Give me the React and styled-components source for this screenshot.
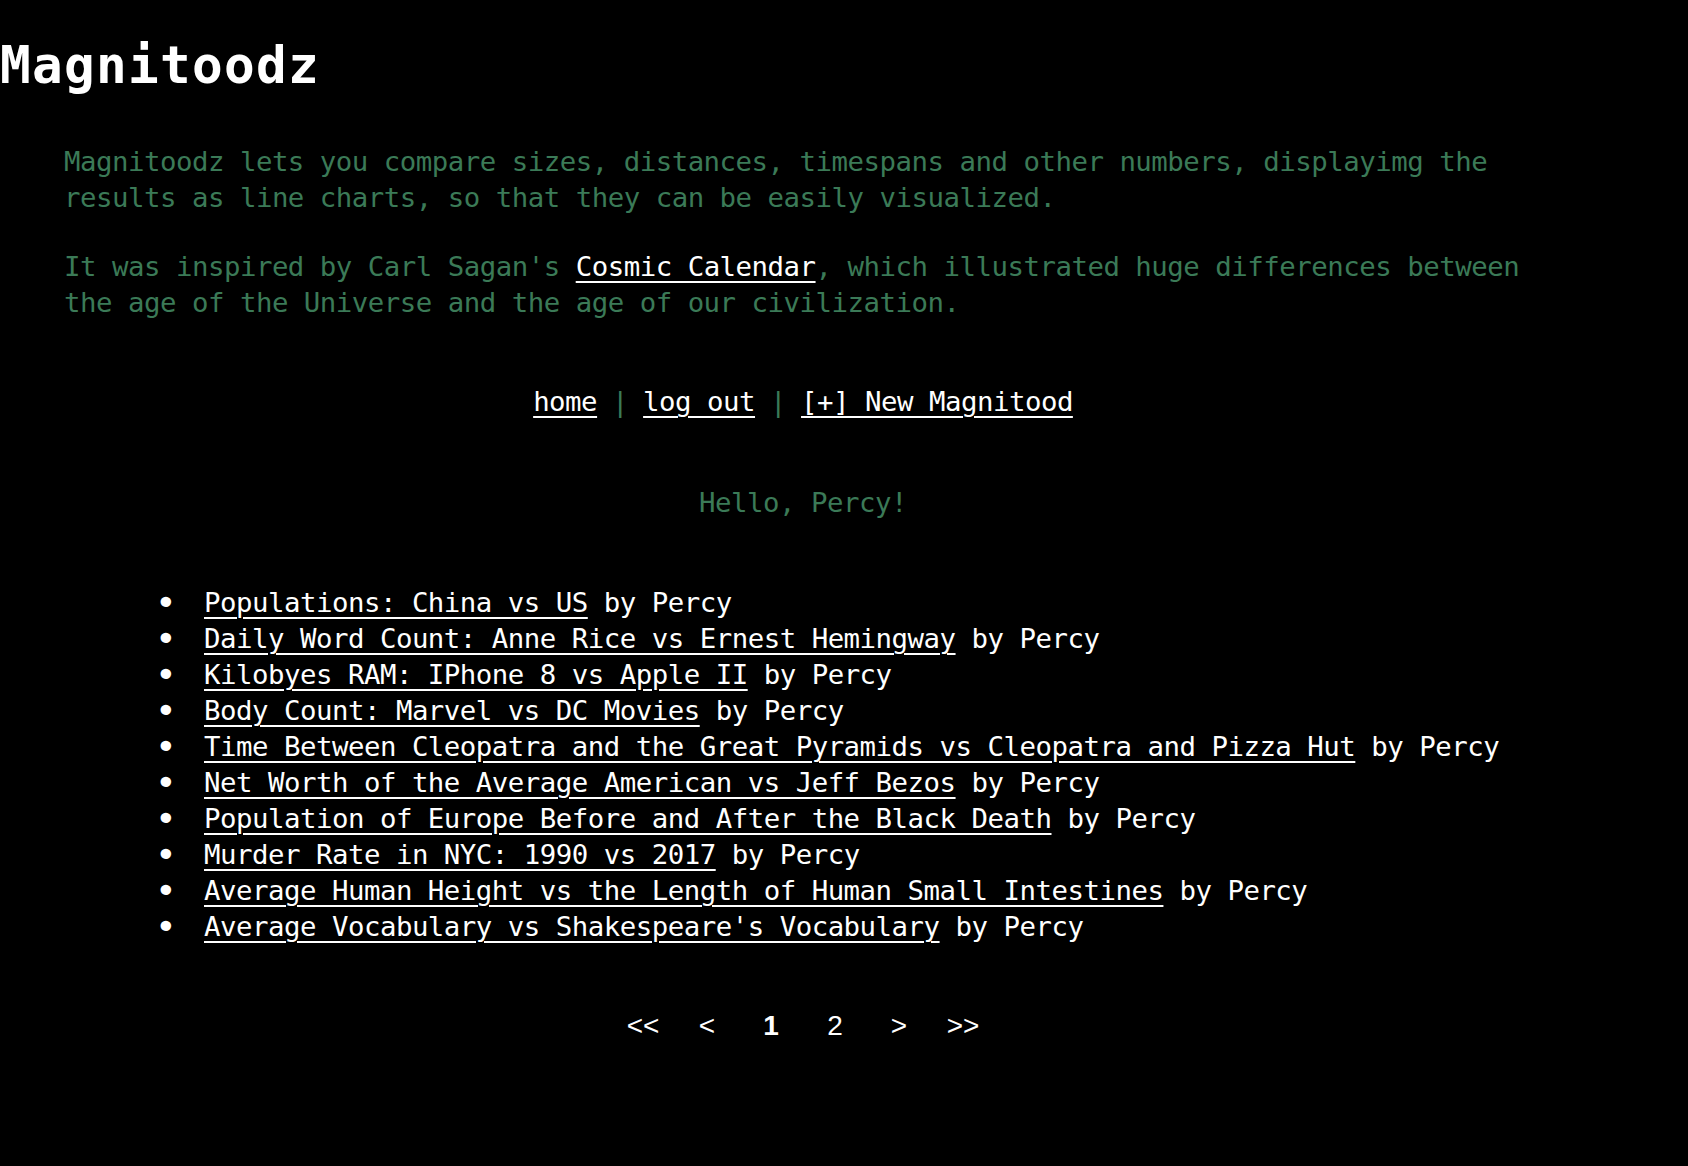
import React from 'react';
import styled, { createGlobalStyle } from 'styled-components';

const GlobalStyle = createGlobalStyle`
  html, body {
    margin: 0;
    padding: 0;
    background: #000;
  }
  body {
    font-family: 'DejaVu Sans Mono', 'Liberation Mono', monospace;
    color: #fff;
  }
`;

const green = '#3b7a57';

const Title = styled.h1`
  margin: 0;
  padding-top: 36px;
  font-size: 51px;
  line-height: 60px;
  font-weight: 700;
  letter-spacing: 1.3px;
  color: #fff;
`;

const Main = styled.main`
  padding: 0 146px 80px 64px;
  font-size: 27.4px;
  line-height: 36px;
  letter-spacing: -0.5px;
`;

const Intro = styled.p`
  margin: ${(p) => (p.first ? '48px' : '33px')} 0 0;
  color: ${green};
`;

const Link = styled.a`
  color: #fff;
  text-decoration: underline;
  text-underline-offset: 5px;
  text-decoration-thickness: 2px;
`;

const Nav = styled.nav`
  margin-top: 63px;
  text-align: center;
  color: ${green};
`;

const Sep = styled.span`
  margin: 0 15px;
`;

const Greeting = styled.p`
  margin: 65px 0 0;
  text-align: center;
  color: ${green};
`;

const List = styled.ul`
  margin: 64px 0 0;
  padding-left: 140px;
  list-style: none;
  color: #fff;
`;

const Item = styled.li`
  position: relative;
  &::before {
    content: '•';
    position: absolute;
    left: -49px;
    top: 0;
    font-size: 36px;
    line-height: 36px;
  }
`;

const Pager = styled.div`
  display: flex;
  justify-content: center;
  margin-top: 63px;
  font-family: 'Liberation Sans', Arial, sans-serif;
  font-size: 28px;
  letter-spacing: 0;
`;

const PageLink = styled.a`
  width: 64px;
  text-align: center;
  color: #fff;
  text-decoration: none;
  font-weight: ${(p) => (p.current ? 700 : 400)};
`;

const magnitoods = [
  'Populations: China vs US',
  'Daily Word Count: Anne Rice vs Ernest Hemingway',
  'Kilobyes RAM: IPhone 8 vs Apple II',
  'Body Count: Marvel vs DC Movies',
  'Time Between Cleopatra and the Great Pyramids vs Cleopatra and Pizza Hut',
  'Net Worth of the Average American vs Jeff Bezos',
  'Population of Europe Before and After the Black Death',
  'Murder Rate in NYC: 1990 vs 2017',
  'Average Human Height vs the Length of Human Small Intestines',
  "Average Vocabulary vs Shakespeare's Vocabulary",
];

const pages = [
  { label: '<<' },
  { label: '<' },
  { label: '1', current: true },
  { label: '2' },
  { label: '>' },
  { label: '>>' },
];

export default function App() {
  return (
    <>
      <GlobalStyle />
      <Title>Magnitoodz</Title>
      <Main>
        <Intro first>
          Magnitoodz lets you compare sizes, distances, timespans and other numbers, displayimg the
          results as line charts, so that they can be easily visualized.
        </Intro>
        <Intro>
          It was inspired by Carl Sagan's <Link href="#">Cosmic Calendar</Link>, which illustrated
          huge differences between the age of the Universe and the age of our civilization.
        </Intro>
        <Nav>
          <Link href="#">home</Link>
          <Sep>|</Sep>
          <Link href="#">log out</Link>
          <Sep>|</Sep>
          <Link href="#">[+] New Magnitood</Link>
        </Nav>
        <Greeting>Hello, Percy!</Greeting>
        <List>
          {magnitoods.map((m) => (
            <Item key={m}>
              <Link href="#">{m}</Link> by Percy
            </Item>
          ))}
        </List>
        <Pager>
          {pages.map((p) => (
            <PageLink key={p.label} href="#" current={p.current ? 1 : 0}>
              {p.label}
            </PageLink>
          ))}
        </Pager>
      </Main>
    </>
  );
}
